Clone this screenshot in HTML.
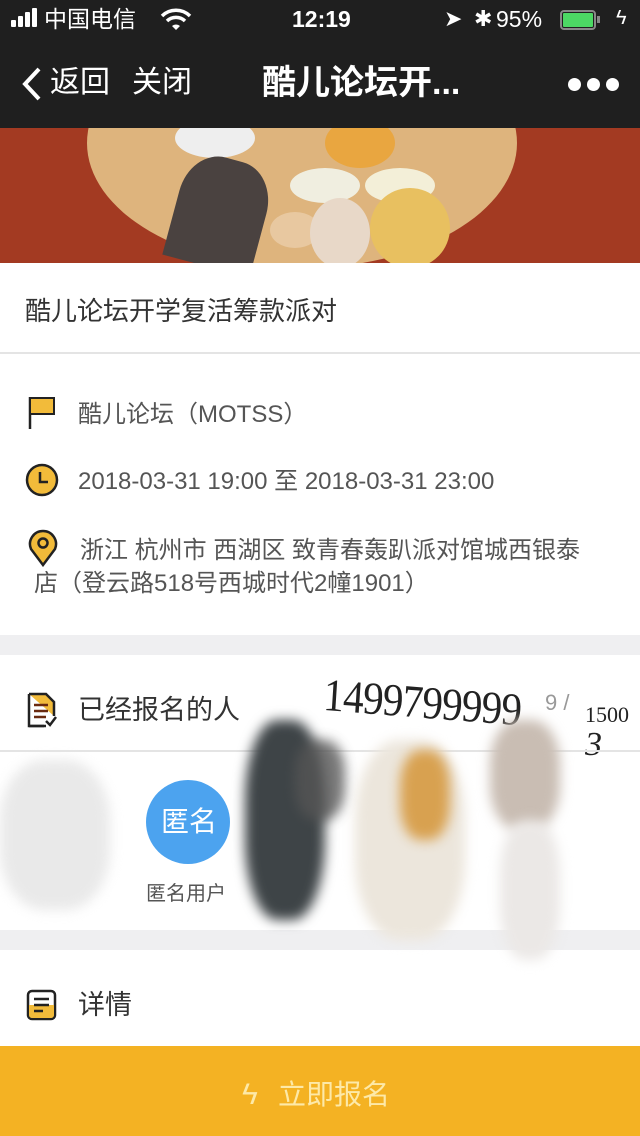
<!DOCTYPE html>
<html><head><meta charset="utf-8"><style>
*{margin:0;padding:0;box-sizing:border-box}
body{width:640px;height:1136px;overflow:hidden;background:#fff;font-family:"Liberation Sans","Noto Sans CJK SC",sans-serif;position:relative}
.a{position:absolute}
.t{position:absolute;white-space:nowrap;line-height:1}
.blob{position:absolute;filter:blur(6px);border-radius:40%}
</style></head><body>
<div class="a" style="left:0;top:0;width:640px;height:128px;background:#1f1f1f"></div>
<div class="a" style="left:11px;top:20px;width:5px;height:7px;background:#fff;border-radius:1px"></div>
<div class="a" style="left:18px;top:16px;width:5px;height:11px;background:#fff;border-radius:1px"></div>
<div class="a" style="left:25px;top:12px;width:5px;height:15px;background:#fff;border-radius:1px"></div>
<div class="a" style="left:32px;top:8px;width:5px;height:19px;background:#fff;border-radius:1px"></div>
<div class="t" style="left:44px;top:8px;font-size:23px;color:#fff">中国电信</div>
<svg class="a" style="left:160px;top:8px" width="32" height="22" viewBox="0 0 32 22"><path d="M2 8 A20 20 0 0 1 30 8" stroke="#fff" stroke-width="3.5" fill="none"/><path d="M7 13 A13 13 0 0 1 25 13" stroke="#fff" stroke-width="3.5" fill="none"/><path d="M12 18 L16 22 L20 18 A6 6 0 0 0 12 18Z" fill="#fff"/></svg>
<div class="t" style="left:292px;top:8px;font-size:23px;color:#fff;font-weight:bold">12:19</div>
<div class="t" style="left:444px;top:8px;font-size:22px;color:#fff">➤</div>
<div class="t" style="left:474px;top:8px;font-size:22px;color:#fff">✱</div>
<div class="t" style="left:496px;top:8px;font-size:23px;color:#fff">95%</div>
<div class="a" style="left:560px;top:10px;width:36px;height:20px;border:2px solid #888;border-radius:4px;padding:1px"><div style="width:100%;height:100%;background:#4cd964;border-radius:1px"></div></div>
<div class="a" style="left:597px;top:16px;width:3px;height:7px;background:#888"></div>
<div class="t" style="left:616px;top:8px;font-size:20px;color:#fff">ϟ</div>
<svg class="a" style="left:20px;top:66px" width="24" height="36" viewBox="0 0 24 36"><path d="M19 3 L5 18 L19 33" stroke="#fff" stroke-width="4" fill="none"/></svg>
<div class="t" style="left:50px;top:68px;font-size:30px;color:#fff">返回</div>
<div class="t" style="left:132px;top:68px;font-size:30px;color:#fff">关闭</div>
<div class="t" style="left:262px;top:66px;font-size:34px;color:#fff;font-weight:bold">酷儿论坛开...</div>
<div class="a" style="left:568px;top:78px;width:13px;height:13px;border-radius:50%;background:#fff;box-shadow:19px 0 #fff,38px 0 #fff"></div>
<div class="a" style="left:0;top:128px;width:640px;height:135px;background:#a33a22;overflow:hidden">
 <div class="a" style="left:87px;top:-110px;width:430px;height:250px;border-radius:50%;background:#deb47d"></div>
 <div class="a" style="left:175px;top:-10px;width:80px;height:40px;border-radius:50%;background:#eee"></div>
 <div class="a" style="left:325px;top:-10px;width:70px;height:50px;border-radius:50%;background:#e9a640"></div>
 <div class="a" style="left:290px;top:40px;width:70px;height:35px;border-radius:50%;background:#f0eee0"></div>
 <div class="a" style="left:365px;top:40px;width:70px;height:35px;border-radius:50%;background:#f3efd8"></div>
 <div class="a" style="left:270px;top:84px;width:50px;height:36px;border-radius:50%;background:#e8c8a0"></div>
 <div class="a" style="left:175px;top:30px;width:90px;height:110px;border-radius:40% 40% 0 0;background:#4a4240;transform:rotate(15deg)"></div>
 <div class="a" style="left:310px;top:70px;width:60px;height:70px;border-radius:50%;background:#e8d8c8"></div>
 <div class="a" style="left:370px;top:60px;width:80px;height:80px;border-radius:50%;background:#e8c060"></div>
</div>
<div class="t" style="left:25px;top:298px;font-size:26px;color:#333">酷儿论坛开学复活筹款派对</div>
<div class="a" style="left:0;top:352px;width:640px;height:2px;background:#e4e4e4"></div>
<svg class="a" style="left:26px;top:395px" width="32" height="36" viewBox="0 0 32 36"><path d="M4 2 V34" stroke="#222" stroke-width="2.5"/><rect x="4" y="3" width="24" height="16" fill="#f2bb3a" stroke="#222" stroke-width="2"/></svg>
<div class="t" style="left:78px;top:403px;font-size:24px;color:#555">酷儿论坛（MOTSS）</div>
<svg class="a" style="left:25px;top:463px" width="34" height="34" viewBox="0 0 34 34"><circle cx="17" cy="17" r="15" fill="#f2bb3a" stroke="#222" stroke-width="2.5"/><path d="M15 9 V19 H23" stroke="#222" stroke-width="2.5" fill="none"/></svg>
<div class="t" style="left:78px;top:470px;font-size:24px;color:#555">2018-03-31 19:00 至 2018-03-31 23:00</div>
<svg class="a" style="left:27px;top:529px" width="32" height="38" viewBox="0 0 32 38"><path d="M16 36 L4 20 A13 13 0 1 1 28 20 Z" fill="#f2bb3a" stroke="#222" stroke-width="2.5"/><circle cx="16" cy="14" r="4.5" fill="none" stroke="#222" stroke-width="2.5"/></svg>
<div class="t" style="left:80px;top:539px;font-size:24px;color:#555">浙江 杭州市 西湖区 致青春轰趴派对馆城西银泰</div>
<div class="t" style="left:34px;top:572px;font-size:24px;color:#555">店（登云路518号西城时代2幢1901）</div>
<div class="a" style="left:0;top:635px;width:640px;height:20px;background:#efeff1"></div>
<svg class="a" style="left:26px;top:692px" width="32" height="36" viewBox="0 0 32 36"><path d="M3 2 H20 L28 10 V24 M20 34 H3 Z" fill="#f2bb3a" stroke="#222" stroke-width="2.5"/><path d="M3 2 V34 H18" stroke="#222" stroke-width="2.5" fill="none"/><path d="M8 13 H22 M8 19 H22 M8 25 H20" stroke="#6a2a10" stroke-width="2.5"/><path d="M20 29 L24 33 L30 25" stroke="#222" stroke-width="2.5" fill="none"/></svg>
<div class="t" style="left:78px;top:697px;font-size:27px;color:#333">已经报名的人</div>
<div class="t" style="left:325px;top:672px;font-size:46px;color:#222;font-family:'Liberation Serif',serif;font-weight:normal;transform-origin:0 0;transform:scaleX(0.9) rotate(4deg);letter-spacing:-1px">1499799999</div>
<div class="t" style="left:545px;top:692px;font-size:22px;color:#999">9 /</div>
<div class="t" style="left:585px;top:704px;font-size:22px;color:#222;font-family:'Liberation Serif',serif">1500</div>
<div class="t" style="left:585px;top:728px;font-size:34px;color:#222;font-family:'Liberation Serif',serif;font-style:italic">3</div>
<div class="a" style="left:0;top:750px;width:640px;height:2px;background:#e4e4e4"></div>
<div class="a" style="left:0;top:930px;width:640px;height:20px;background:#efeff1"></div>
<div class="blob" style="left:0;top:760px;width:110px;height:150px;background:#e4e4e4;opacity:.8"></div>
<div class="blob" style="left:245px;top:720px;width:80px;height:200px;background:#3e4447"></div>
<div class="blob" style="left:295px;top:740px;width:50px;height:80px;background:#555;opacity:.8"></div>
<div class="blob" style="left:355px;top:740px;width:110px;height:200px;background:#ece6dc"></div>
<div class="blob" style="left:400px;top:750px;width:50px;height:90px;background:#d8a150"></div>
<div class="blob" style="left:490px;top:720px;width:70px;height:110px;background:#c9bdb3"></div>
<div class="blob" style="left:500px;top:820px;width:60px;height:140px;background:#ebe8e6"></div>
<div class="a" style="left:146px;top:780px;width:84px;height:84px;border-radius:50%;background:#4ca3ef"></div>
<div class="t" style="left:161px;top:808px;font-size:28px;color:#fff">匿名</div>
<div class="t" style="left:146px;top:884px;font-size:20px;color:#555">匿名用户</div>
<svg class="a" style="left:26px;top:989px" width="32" height="32" viewBox="0 0 32 32"><rect x="2" y="2" width="27" height="28" rx="4" fill="#fff" stroke="#222" stroke-width="2.5"/><path d="M3 16 H28 V26 A3 3 0 0 1 25 29 H6 A3 3 0 0 1 3 26 Z" fill="#f2bb3a"/><path d="M8 10 H23 M8 16 H23 M8 22 H17" stroke="#222" stroke-width="2.5"/></svg>
<div class="t" style="left:78px;top:992px;font-size:27px;color:#333">详情</div>
<div class="a" style="left:0;top:1046px;width:640px;height:90px;background:#f4b223"></div>
<div class="t" style="left:242px;top:1080px;font-size:30px;color:#fde9a8">ϟ</div>
<div class="t" style="left:278px;top:1081px;font-size:28px;color:#fde9a8">立即报名</div>
</body></html>
